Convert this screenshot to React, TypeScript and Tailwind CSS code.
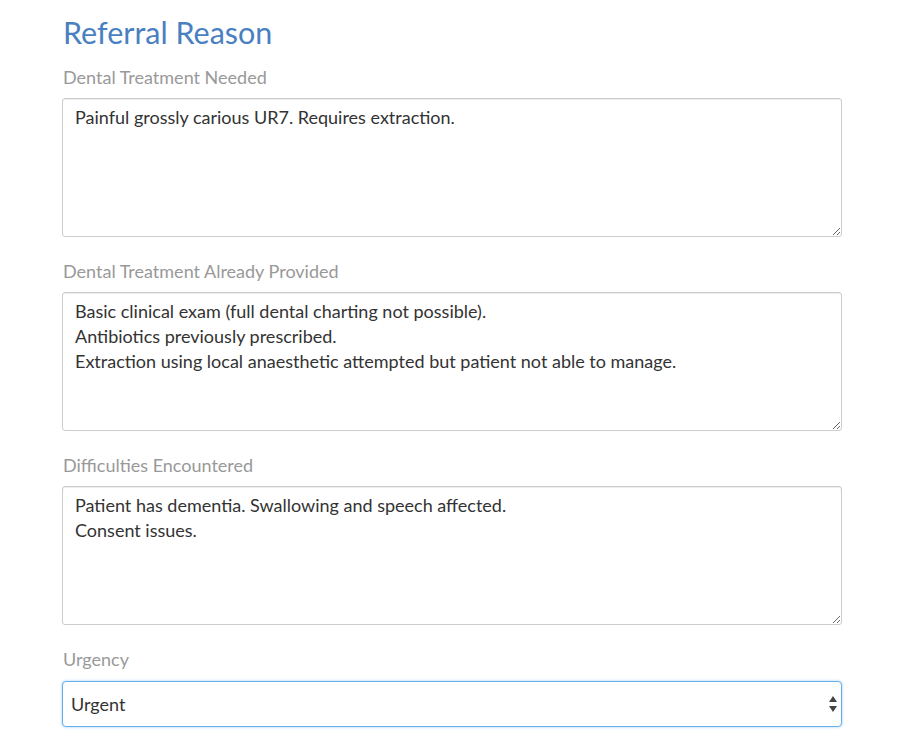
import { ChangeEvent, useState } from "react"

const fields = [
  {
    label: "Dental Treatment Needed",
    value: "Painful grossly carious UR7. Requires extraction.",
  },
  {
    label: "Dental Treatment Already Provided",
    value:
      "Basic clinical exam (full dental charting not possible).\nAntibiotics previously prescribed.\nExtraction using local anaesthetic attempted but patient not able to manage.",
  },
  {
    label: "Difficulties Encountered",
    value: "Patient has dementia. Swallowing and speech affected.\nConsent issues.",
  },
]

export default function App() {
  const [urgency, setUrgency] = useState("Urgent")

  return (
    <div className="min-h-screen bg-white font-['Lato','Liberation_Sans',sans-serif] text-[#333]">
      <div className="w-[780px] ml-[62px] pt-[14px] flex flex-col">
        <h2 className="text-[30.5px] leading-[36px] text-[#4a7fc1] pl-[1px]">Referral Reason</h2>

        {fields.map((f, i) => (
          <div key={f.label} className={i === 0 ? "mt-[15px]" : "mt-[22px]"}>
            <label className="block text-[18px] leading-[24px] text-[#999] pl-[1px] mb-[9px]">{f.label}</label>
            <textarea
              defaultValue={f.value}
              className="block w-full h-[139px] border border-[#ccc] rounded-[3px] px-[12px] pt-[6px] text-[18px] leading-[25px] text-[#333] outline-none shadow-[inset_0_1px_1px_rgba(0,0,0,0.075)]"
            />
          </div>
        ))}

        <div className="mt-[22px]">
          <label className="block text-[18px] leading-[24px] text-[#999] pl-[1px] mb-[10px]">Urgency</label>
          <div className="relative">
            <select
              value={urgency}
              onChange={(e: ChangeEvent<HTMLSelectElement>) => setUrgency(e.target.value)}
              className="block w-full h-[46px] appearance-none bg-white border border-[#66afe9] rounded-[4px] pl-[8px] text-[18px] text-[#333] outline-none shadow-[0_0_3px_rgba(102,175,233,0.6)]"
            >
              <option>Urgent</option>
              <option>Routine</option>
            </select>
            <svg
              width="10"
              height="18"
              viewBox="0 0 10 18"
              className="absolute right-[4px] top-[14px] pointer-events-none"
            >
              <path d="M5 1 L9 7 L1 7 Z" fill="#444" />
              <path d="M5 17 L9 11 L1 11 Z" fill="#444" />
            </svg>
          </div>
        </div>
      </div>
    </div>
  )
}
